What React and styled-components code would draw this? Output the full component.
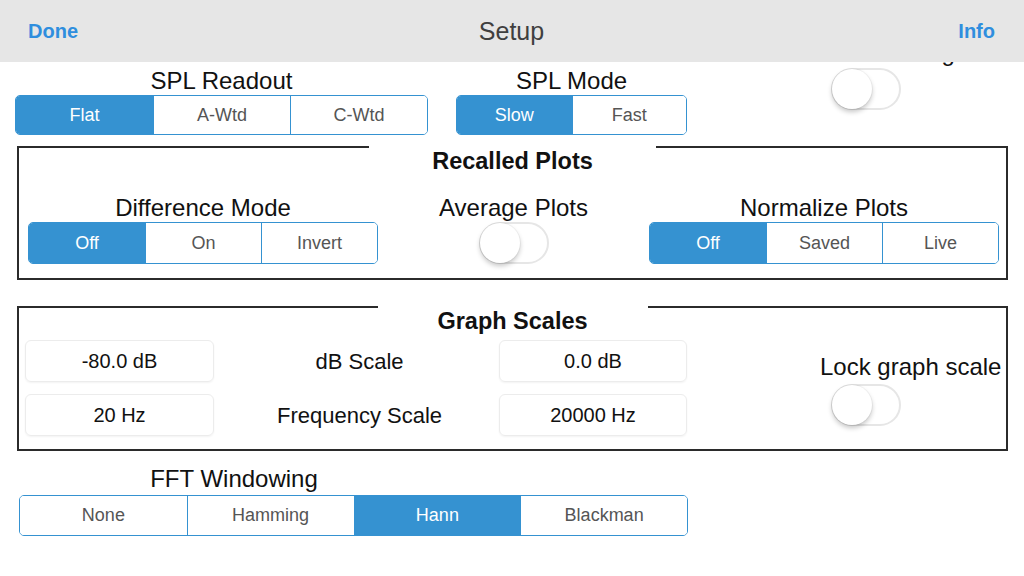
import React, { useState } from 'react'
import styled, { createGlobalStyle } from 'styled-components'

const BLUE = '#3592d1'
const LINE = '#2b2b2b'

const GlobalStyle = createGlobalStyle`
  html, body {
    margin: 0;
    padding: 0;
    background: #fff;
    font-family: "Liberation Sans", Arial, sans-serif;
  }
`

const Page = styled.div`
  width: 1024px;
  height: 576px;
  display: flex;
  flex-direction: column;
  overflow: hidden;
  background: #fff;
`

const NavBar = styled.div`
  height: 62px;
  flex: none;
  display: flex;
  align-items: center;
  justify-content: space-between;
  padding: 0 29px 0 28px;
  background: #e6e6e6;
`

const NavButton = styled.div`
  font-size: 20px;
  font-weight: bold;
  color: #2f8ede;
  width: 60px;
  text-align: ${(p) => (p.$right ? 'right' : 'left')};
`

const NavTitle = styled.div`
  font-size: 25px;
  color: #3f3f3f;
`

const Content = styled.div`
  flex: 1;
  overflow: hidden;
  display: flex;
  flex-direction: column;
`

const TopRow = styled.div`
  display: flex;
  align-items: flex-start;
  padding: 6px 0 0 15px;
`

const Group = styled.div`
  width: ${(p) => p.$width}px;
  margin-left: ${(p) => p.$offset || 0}px;
  display: flex;
  flex-direction: column;
`

const Label = styled.div`
  font-size: 24px;
  line-height: 26px;
  color: #111;
  text-align: ${(p) => p.$align || 'center'};
  white-space: nowrap;
  margin-bottom: ${(p) => p.$gap ?? 1}px;
`

const SwitchGroup = styled.div`
  margin-left: 133px;
  margin-top: ${(p) => p.$lift || 0}px;
  display: flex;
  flex-direction: column;
  align-items: flex-start;
`

const SegBar = styled.div`
  display: grid;
  grid-template-columns: repeat(${(p) => p.$count}, 1fr);
  height: ${(p) => p.$height || 40}px;
  border: 1.5px solid ${BLUE};
  border-radius: 5px;
  overflow: hidden;
  box-sizing: border-box;
`

const Segment = styled.div`
  display: flex;
  align-items: center;
  justify-content: center;
  font-size: 18px;
  color: ${(p) => (p.$active ? '#fff' : '#555')};
  background: ${(p) => (p.$active ? BLUE : '#fff')};
  border-left: ${(p) => (p.$first ? 'none' : `1px solid ${BLUE}`)};
  cursor: pointer;
`

const Segmented = ({ options, initial = 0, height }) => {
  const [value, setValue] = useState(initial)
  return (
    <SegBar $count={options.length} $height={height}>
      {options.map((o, i) => (
        <Segment key={o} $first={i === 0} $active={i === value} onClick={() => setValue(i)}>
          {o}
        </Segment>
      ))}
    </SegBar>
  )
}

const Track = styled.div`
  width: 70px;
  height: 42px;
  margin-left: ${(p) => p.$indent || 0}px;
  box-sizing: border-box;
  border-radius: 21px;
  border: 2px solid #e6e6e6;
  background: ${(p) => (p.$on ? '#4cd964' : '#fff')};
  position: relative;
  cursor: pointer;
`

const Knob = styled.div`
  position: absolute;
  top: -1px;
  left: ${(p) => (p.$on ? '27px' : '-1px')};
  width: 40px;
  height: 40px;
  border-radius: 50%;
  background: #fff;
  box-shadow: 0 3px 5px rgba(0, 0, 0, 0.22), 0 0 0 1px rgba(0, 0, 0, 0.04);
`

const Toggle = ({ indent }) => {
  const [on, setOn] = useState(false)
  return (
    <Track $on={on} $indent={indent} onClick={() => setOn(!on)}>
      <Knob $on={on} />
    </Track>
  )
}

const Panel = styled.div`
  margin: ${(p) => p.$top}px 16px 0 17px;
  border: 2px solid ${LINE};
  border-top: none;
`

const PanelHead = styled.div`
  display: grid;
  grid-template-columns: 1fr ${(p) => p.$gap}px 1fr;
  margin: 0 -2px;
`

const Rule = styled.div`
  border-top: 2px solid ${LINE};
`

const PanelTitle = styled.div`
  font-size: 23.5px;
  font-weight: bold;
  line-height: 26px;
  padding-top: 2px;
  text-align: center;
  color: #111;
`

const PlotsBody = styled.div`
  display: grid;
  grid-template-columns: 350px 1fr 350px;
  padding: 21px 7px 14px 9px;
`

const Column = styled.div`
  display: flex;
  flex-direction: column;
  align-items: ${(p) => (p.$center ? 'center' : 'stretch')};
`

const ScalesBody = styled.div`
  display: grid;
  grid-template-columns: 189px 285px 188px 1fr;
  grid-template-rows: 42px 42px;
  row-gap: 12px;
  padding: 6px 0 13px 6px;
`

const Field = styled.div`
  display: flex;
  align-items: center;
  justify-content: center;
  font-size: 20px;
  color: #111;
  border: 1px solid #ececec;
  border-radius: 6px;
  box-shadow: 0 1px 2px rgba(0, 0, 0, 0.05);
  box-sizing: border-box;
`

const ScaleName = styled.div`
  display: flex;
  align-items: center;
  justify-content: center;
  font-size: 22px;
  padding: 2px 0 0 6px;
  color: #111;
`

const LockColumn = styled.div`
  grid-column: 4;
  grid-row: 1 / span 2;
  padding: 14px 0 0 133px;
  display: flex;
  flex-direction: column;
  align-items: flex-start;
`

const WindowSection = styled.div`
  margin: 15px 0 0 19px;
  width: 669px;
`

const WindowLabel = styled(Label)`
  width: 430px;
  margin-bottom: 3px;
`

export default function App() {
  return (
    <Page>
      <GlobalStyle />
      <NavBar>
        <NavButton>Done</NavButton>
        <NavTitle>Setup</NavTitle>
        <NavButton $right>Info</NavButton>
      </NavBar>
      <Content>
        <TopRow>
          <Group $width={413}>
            <Label>SPL Readout</Label>
            <Segmented options={['Flat', 'A-Wtd', 'C-Wtd']} />
          </Group>
          <Group $width={231} $offset={28}>
            <Label>SPL Mode</Label>
            <Segmented options={['Slow', 'Fast']} />
          </Group>
          <SwitchGroup $lift={-28}>
            <Label $align='left' $gap={2}>Min Reading</Label>
            <Toggle indent={11} />
          </SwitchGroup>
        </TopRow>

        <Panel $top={11}>
          <PanelHead $gap={287}>
            <Rule />
            <PanelTitle>Recalled Plots</PanelTitle>
            <Rule />
          </PanelHead>
          <PlotsBody>
            <Column>
              <Label>Difference Mode</Label>
              <Segmented options={['Off', 'On', 'Invert']} height={42} />
            </Column>
            <Column $center>
              <Label>Average Plots</Label>
              <Toggle />
            </Column>
            <Column>
              <Label>Normalize Plots</Label>
              <Segmented options={['Off', 'Saved', 'Live']} height={42} />
            </Column>
          </PlotsBody>
        </Panel>

        <Panel $top={26}>
          <PanelHead $gap={270}>
            <Rule />
            <PanelTitle>Graph Scales</PanelTitle>
            <Rule />
          </PanelHead>
          <ScalesBody>
            <Field>-80.0 dB</Field>
            <ScaleName>dB Scale</ScaleName>
            <Field>0.0 dB</Field>
            <LockColumn>
              <Label $align='left' $gap={4}>Lock graph scale</Label>
              <Toggle indent={11} />
            </LockColumn>
            <Field>20 Hz</Field>
            <ScaleName>Frequency Scale</ScaleName>
            <Field>20000 Hz</Field>
          </ScalesBody>
        </Panel>

        <WindowSection>
          <WindowLabel>FFT Windowing</WindowLabel>
          <Segmented options={['None', 'Hamming', 'Hann', 'Blackman']} initial={2} height={41} />
        </WindowSection>
      </Content>
    </Page>
  )
}
